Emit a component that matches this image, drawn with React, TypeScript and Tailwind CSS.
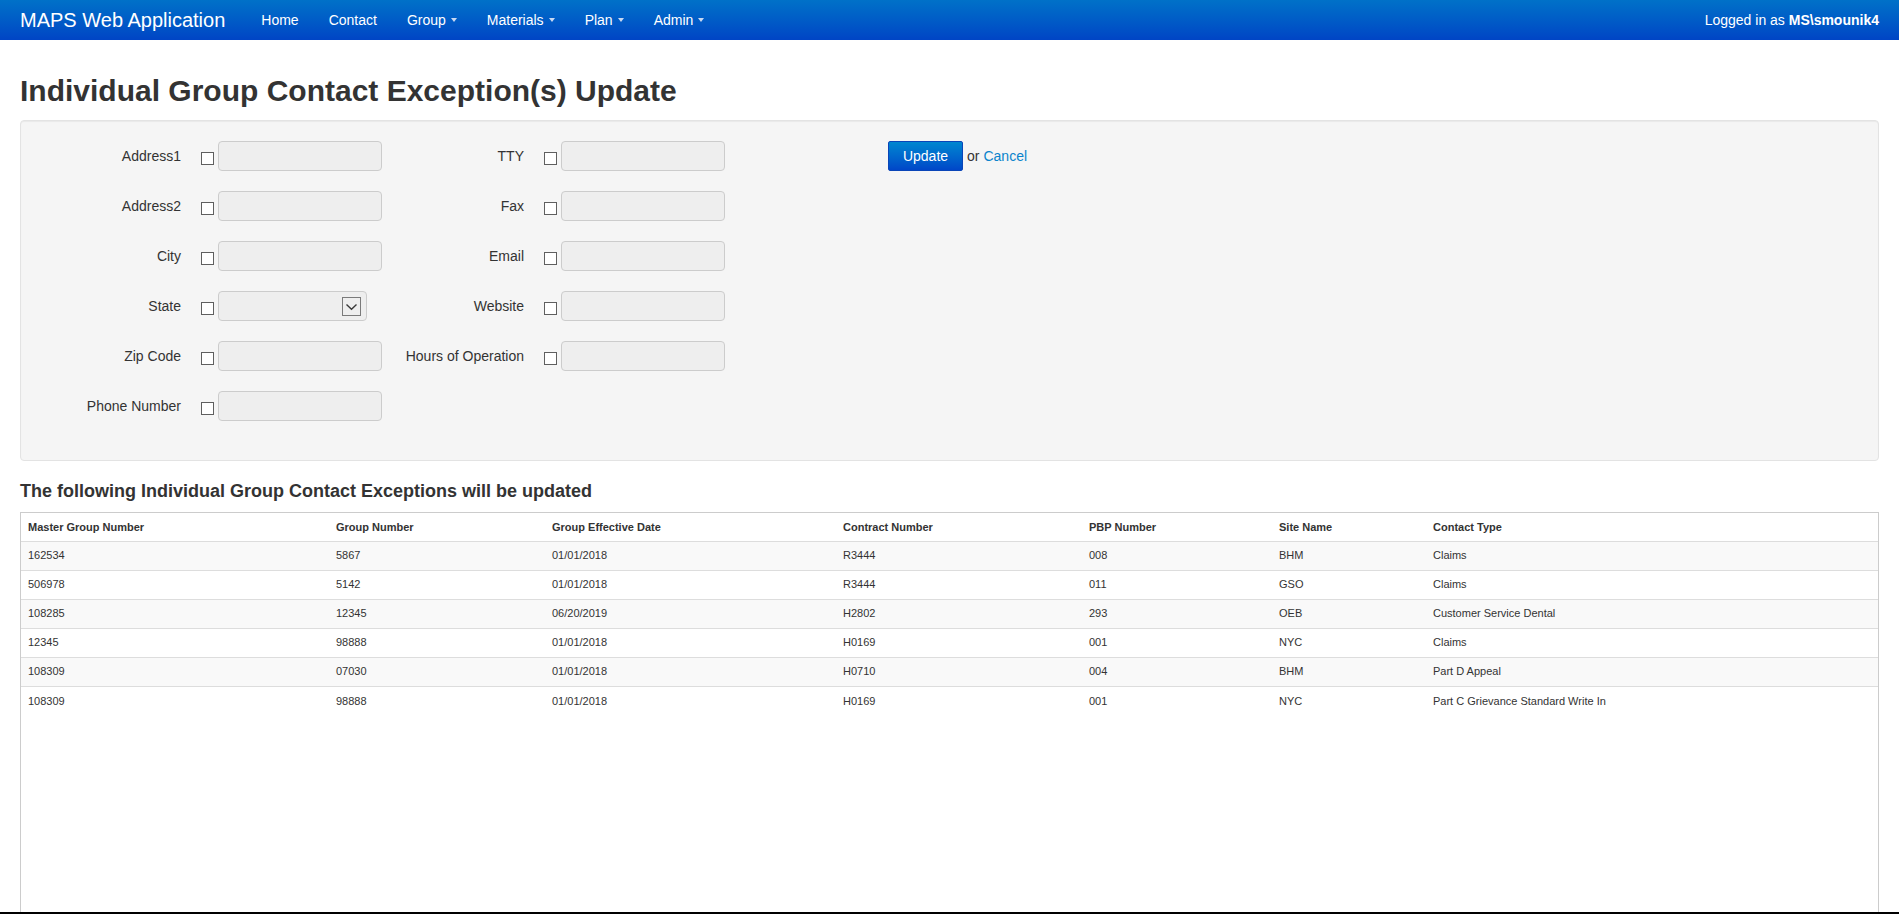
import React from "react";

const navItems = [
  { label: "Home" },
  { label: "Contact" },
  { label: "Group", menu: true },
  { label: "Materials", menu: true },
  { label: "Plan", menu: true },
  { label: "Admin", menu: true },
];

const leftFields = [
  { label: "Address1" },
  { label: "Address2" },
  { label: "City" },
  { label: "State", select: true },
  { label: "Zip Code" },
  { label: "Phone Number" },
];

const rightFields = [
  { label: "TTY" },
  { label: "Fax" },
  { label: "Email" },
  { label: "Website" },
  { label: "Hours of Operation" },
];

const rows = [
  ["162534", "5867", "01/01/2018", "R3444", "008", "BHM", "Claims"],
  ["506978", "5142", "01/01/2018", "R3444", "011", "GSO", "Claims"],
  ["108285", "12345", "06/20/2019", "H2802", "293", "OEB", "Customer Service Dental"],
  ["12345", "98888", "01/01/2018", "H0169", "001", "NYC", "Claims"],
  ["108309", "07030", "01/01/2018", "H0710", "004", "BHM", "Part D Appeal"],
  ["108309", "98888", "01/01/2018", "H0169", "001", "NYC", "Part C Grievance Standard Write In"],
];

const headers = [
  "Master Group Number",
  "Group Number",
  "Group Effective Date",
  "Contract Number",
  "PBP Number",
  "Site Name",
  "Contact Type",
];

const Caret = () => (
  <span className="ml-[5px] inline-block w-0 h-0 border-l-[3.5px] border-r-[3.5px] border-t-[4px] border-l-transparent border-r-transparent border-t-[#c9d9f2]" />
);

const Checkbox = () => (
  <span className="mt-[4px] block w-[13px] h-[13px] border border-[#5f5f5f] bg-white" />
);

const FieldRow = ({
  label,
  select,
  labelWidth,
}: {
  label: string;
  select?: boolean;
  labelWidth: string;
}) => (
  <div className="flex items-center h-[30px]">
    <label className={`${labelWidth} text-right text-[14px] text-[#333]`}>{label}</label>
    <span className="ml-[20px]">
      <Checkbox />
    </span>
    {select ? (
      <div className="relative ml-[4px] w-[149px] h-[30px] border border-[#cccccc] bg-[#eeeeee] rounded-[4px]">
        <span className="absolute right-[5px] top-[5px] w-[19px] h-[19px] border border-[#7a7a7a] bg-[#eeeeee] flex items-center justify-center">
          <svg width="13" height="8" viewBox="0 0 13 8">
            <path d="M1.5 1.5 L6.5 6.2 L11.5 1.5" fill="none" stroke="#3a3a3a" strokeWidth="1.4" />
          </svg>
        </span>
      </div>
    ) : (
      <div className="ml-[4px] w-[164px] h-[30px] border border-[#cccccc] bg-[#eeeeee] rounded-[4px]" />
    )}
  </div>
);

export default function App() {
  return (
    <div className="h-[914px] flex flex-col overflow-hidden bg-white font-['Liberation_Sans',Arial,sans-serif] text-[#333]">
      <nav className="h-[40px] shrink-0 flex items-center bg-gradient-to-b from-[#0071c8] to-[#0044c5] text-white">
        <span className="ml-[20px] text-[20px] leading-[20px]">MAPS Web Application</span>
        <ul className="ml-[21px] flex items-center text-[14px]">
          {navItems.map((item) => (
            <li key={item.label} className="px-[15px] flex items-center">
              {item.label}
              {item.menu && <Caret />}
            </li>
          ))}
        </ul>
        <span className="ml-auto mr-[20px] text-[14px]">
          Logged in as <b>MS\smounik4</b>
        </span>
      </nav>

      <div className="flex-1 flex flex-col px-[20px]">
        <h1 className="mt-[31px] mb-[9px] text-[30px] leading-[40px] font-bold text-[#333]">
          Individual Group Contact Exception(s) Update
        </h1>

        <div className="h-[341px] shrink-0 border border-[#e3e3e3] bg-[#f5f5f5] rounded-[4px] shadow-[inset_0_1px_1px_rgba(0,0,0,0.05)] pl-[19px] pt-[20px]">
          <div className="flex">
            <div className="flex flex-col gap-[20px]">
              {leftFields.map((f) => (
                <FieldRow key={f.label} label={f.label} select={f.select} labelWidth="w-[141px]" />
              ))}
            </div>
            <div className="flex flex-col gap-[20px]">
              {rightFields.map((f) => (
                <FieldRow key={f.label} label={f.label} labelWidth="w-[142px]" />
              ))}
            </div>
            <div className="ml-[163px] flex items-start">
              <div className="flex items-center h-[30px] text-[14px]">
                <button className="w-[75px] h-[30px] border border-[#0a45b8] bg-gradient-to-b from-[#0086d0] to-[#0046c8] text-white rounded-[2px]">
                  Update
                </button>
                <span className="ml-[4px] text-[#333]">or</span>
                <a className="ml-[4px] text-[#0a84cc]">Cancel</a>
              </div>
            </div>
          </div>
        </div>

        <h4 className="mt-[20px] mb-[11px] text-[18px] leading-[20px] font-bold text-[#333]">
          The following Individual Group Contact Exceptions will be updated
        </h4>

        <div className="flex-1 border-x border-t border-[#cccccc]">
          <table className="w-full table-fixed border-collapse text-[11px] text-[#333]">
            <colgroup>
              <col className="w-[308px]" />
              <col className="w-[216px]" />
              <col className="w-[291px]" />
              <col className="w-[246px]" />
              <col className="w-[190px]" />
              <col className="w-[154px]" />
              <col />
            </colgroup>
            <thead>
              <tr className="h-[28px]">
                {headers.map((h) => (
                  <th key={h} className="px-[7px] text-left font-bold align-middle">
                    {h}
                  </th>
                ))}
              </tr>
            </thead>
            <tbody>
              {rows.map((r, i) => (
                <tr key={i} className={`h-[29px] ${i % 2 === 0 ? "bg-[#f9f9f9]" : "bg-white"}`}>
                  {r.map((c, j) => (
                    <td key={j} className="px-[7px] border-t border-[#dddddd] align-middle">
                      {c}
                    </td>
                  ))}
                </tr>
              ))}
            </tbody>
          </table>
        </div>
      </div>
      <div className="h-[2px] shrink-0 bg-black" />
    </div>
  );
}
